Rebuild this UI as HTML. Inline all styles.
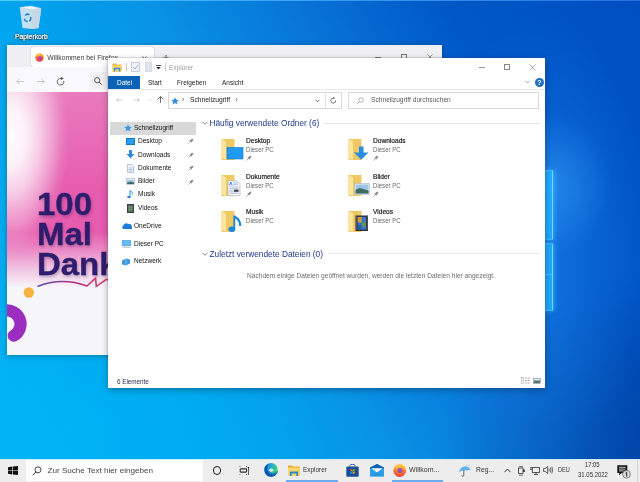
<!DOCTYPE html>
<html><head><meta charset="utf-8">
<style>
*{margin:0;padding:0;box-sizing:border-box}
html,body{width:640px;height:482px;overflow:hidden}
body{position:relative;font-family:"Liberation Sans",sans-serif;
background:radial-gradient(ellipse 260px 170px at 90px 420px,rgba(0,185,250,.35) 0%,rgba(0,185,250,0) 100%),radial-gradient(ellipse 220px 200px at 660px 470px,rgba(0,30,110,.45) 0%,rgba(0,30,110,0) 100%),linear-gradient(62deg,#00b4f3 0%,#00a6ef 27%,#0894e6 44%,#0874d8 61.5%,#0058c8 78%,#004ec2 100%);}
.a{position:absolute;white-space:nowrap}
#wall2{position:absolute;left:0;top:0;width:640px;height:482px;
background:radial-gradient(ellipse 60px 70px at 552px 185px,rgba(60,170,255,.45) 0%,rgba(60,170,255,0) 100%),radial-gradient(ellipse 110px 230px at 540px 245px,rgba(40,140,250,.45) 0%,rgba(40,140,250,.22) 50%,rgba(40,140,250,0) 100%);}
.pane{position:absolute;left:530px;width:22.5px;background:linear-gradient(90deg,rgba(25,165,250,.8),rgba(35,180,255,.85));border-right:1.5px solid #6adcff;border-top:1px solid rgba(90,200,255,.5);border-bottom:1px solid rgba(90,200,255,.5);box-shadow:2px 0 4px rgba(80,200,255,.45)}
#topline{position:absolute;left:0;top:0;width:640px;height:1.3px;background:linear-gradient(90deg,#52cdfa,#3aa0f0 50%,#2a70e0)}
/* firefox */
#ff{will-change:transform;position:absolute;left:7px;top:45px;width:435px;height:310px;background:#f0f0f4;box-shadow:0 1px 6px rgba(0,0,0,.3);overflow:hidden}
#ffcontent{position:absolute;left:0;top:47px;width:435px;height:263px;background:#f7f6fb;overflow:hidden}
/* explorer */
#ex{will-change:transform;position:absolute;left:108px;top:58px;width:437px;height:330px;background:#fff;box-shadow:0 0 0 .5px rgba(90,90,110,.3),0 2px 7px rgba(0,0,0,.3);overflow:hidden}
.t6{font-size:6.5px;color:#222}
.sb{font-size:6.9px;line-height:10px;color:#111;transform:scaleX(.95);transform-origin:0 0}
.hd{font-size:8.3px;line-height:10px;color:#1e3a8a}
.nm{font-size:6.6px;line-height:10px;color:#111;-webkit-text-stroke:.15px #111}
.sub{font-size:6.6px;line-height:10px;color:#6a6a6a;transform:scaleX(.92);transform-origin:0 0}
/* taskbar */
#tb{will-change:transform;position:absolute;left:0;top:459px;width:640px;height:23px;background:#ededed}
</style></head><body>
<div id="wall2"></div>
<div id="topline"></div>
<div class="pane" style="top:170px;height:70px"></div>
<div class="pane" style="top:243px;height:68px"></div>
<div class="a" style="left:545px;top:274px;width:7px;height:1px;background:rgba(120,210,255,.5)"></div>

<!-- recycle bin -->
<svg class="a" style="left:18px;top:5px" width="25" height="25" viewBox="0 0 25 25">
  <path d="M1.7 2.5L13 1 23.2 3.5 20.5 23 14 24 4.5 23z" fill="#d8e8f3" opacity=".9"/>
  <path d="M13 4.5L23.2 3.5 20.5 23 14 24z" fill="#c6d8e6"/>
  <path d="M1.7 2.5L13 1 23.2 3.5 13 4.5z" fill="#f4f8fb" stroke="#b6cad8" stroke-width=".5"/>
  <path d="M7.2 10.5a3 3 0 0 1 4.2-.6M12.3 11.8a3 3 0 0 1-1 4.3M9.8 16.4a3 3 0 0 1-3.4-2.7" fill="none" stroke="#2a7fd0" stroke-width="1.5"/>
</svg>
<div class="a" style="will-change:transform;left:14.5px;top:33px;font-size:6.8px;line-height:8px;color:#fff;-webkit-text-stroke:.25px #fff;text-shadow:0 0 1.5px rgba(0,0,0,1),0 .5px 1px rgba(0,0,0,.9),0 0 2px rgba(0,0,0,.6)">Papierkorb</div>

<!-- FIREFOX -->
<div id="ff">
  <div class="a" style="left:24px;top:2px;width:123px;height:20px;background:#fff;border-radius:3px;box-shadow:0 0 1.5px rgba(0,0,0,.3)"></div>
  <svg class="a" style="left:27.5px;top:8px" width="9" height="9" viewBox="0 0 9 9">
    <defs><radialGradient id="fxa" cx=".45" cy=".2" r=".9"><stop offset="0" stop-color="#ffcf3a"/><stop offset=".45" stop-color="#ff6a2e"/><stop offset="1" stop-color="#e0205a"/></radialGradient></defs>
    <circle cx="4.5" cy="4.6" r="4.2" fill="url(#fxa)"/>
    <circle cx="4.9" cy="5" r="1.9" fill="#9a3ad0" opacity=".85"/>
    <path d="M1 3.2Q2.5 .6 5.5 .8 8.3 1.6 8.6 4.5" fill="none" stroke="#ffc83a" stroke-width=".9"/>
  </svg>
  <div class="a" style="left:40.3px;top:7.8px;font-size:6.8px;line-height:10px;color:#3a3a3a">Willkommen bei Firefox</div>
  <svg class="a" style="left:135px;top:10.8px" width="5" height="5" viewBox="0 0 5 5"><path d="M.5 .5l4 4M4.5 .5l-4 4" stroke="#333" stroke-width=".8"/></svg>
  <svg class="a" style="left:156px;top:10.3px" width="6" height="6" viewBox="0 0 6 6"><path d="M3 0v6M0 3h6" stroke="#333" stroke-width=".8"/></svg>
  <div class="a" style="left:368px;top:11.5px;width:6px;height:.8px;background:#777"></div>
  <div class="a" style="left:394px;top:9px;width:6px;height:6px;border:.8px solid #777"></div>
  <svg class="a" style="left:420px;top:9px" width="6" height="6" viewBox="0 0 6 6"><path d="M.5 .5l5 5M5.5 .5l-5 5" stroke="#777" stroke-width=".8"/></svg>
  <div class="a" style="left:0;top:22px;width:435px;height:25px;background:#f9f9fb"></div>
  <div class="a" style="left:82.5px;top:27px;width:353px;height:16.5px;background:#f1f1f4;border-radius:2px"></div>
  <svg class="a" style="left:9px;top:32.5px" width="8" height="7" viewBox="0 0 8 7"><path d="M7.8 3.5H.8M3.6.6L.8 3.5l2.8 2.9" fill="none" stroke="#b8b8bc" stroke-width=".8"/></svg>
  <svg class="a" style="left:30px;top:32.5px" width="8" height="7" viewBox="0 0 8 7"><path d="M.2 3.5h7M4.4.6l2.8 2.9-2.8 2.9" fill="none" stroke="#b8b8bc" stroke-width=".8"/></svg>
  <svg class="a" style="left:49px;top:32px" width="9" height="9" viewBox="0 0 9 9"><path d="M7.7 3.9A3.3 3.3 0 1 1 5.1 1.5" fill="none" stroke="#4a4a50" stroke-width=".9"/><path d="M5 .1L7.8 1.6 5 3.1z" fill="#4a4a50"/></svg>
  <svg class="a" style="left:87px;top:32px" width="8" height="8" viewBox="0 0 8 8"><circle cx="3.2" cy="3.2" r="2.6" fill="none" stroke="#444" stroke-width=".9"/><path d="M5.1 5.1L7.6 7.6" stroke="#444" stroke-width="1"/></svg>
  <div id="ffcontent">
    <div class="a" style="left:0;top:0;width:435px;height:263px;background:linear-gradient(180deg,rgba(230,92,174,.8) 0px,#e65cae 100px,#e65cae 140px,rgba(230,92,174,.7) 158px,rgba(230,92,174,.3) 178px,rgba(230,92,174,0) 196px)"></div>
    <div class="a" style="left:0;top:0;width:435px;height:200px;background:radial-gradient(ellipse 58px 118px at 4px 45px,rgba(255,255,255,.98) 0%,rgba(255,255,255,.9) 25%,rgba(255,255,255,.68) 48%,rgba(255,255,255,.35) 72%,rgba(255,255,255,.1) 88%,rgba(255,255,255,0) 100%)"></div>
    <div class="a" style="left:30px;top:96.6px;font-size:30.5px;line-height:30.2px;font-weight:bold;color:#2d1d6c;-webkit-text-stroke:.35px #2d1d6c;transform:scaleX(1.08);transform-origin:0 0;text-shadow:1px 2px 3px rgba(40,20,80,.3)">100<br>Mal<br>Dank</div>
    <svg class="a" style="left:0;top:150px" width="120" height="113">
      <defs><linearGradient id="wv" x1="0" y1="0" x2="1" y2="0"><stop offset="0" stop-color="#5058a8"/><stop offset=".5" stop-color="#b02c80"/><stop offset="1" stop-color="#e23a50"/></linearGradient></defs>
      <path d="M30.5 44.5Q54 35 79.9 44L88.6 36.1 89.3 44.5 99.3 37.4 106 40" fill="none" stroke="url(#wv)" stroke-width="1.5" stroke-linejoin="miter"/>
      <circle cx="21.8" cy="50.5" r="5.2" fill="#f7b13e"/>
      <path d="M-2.34 68.7A13.5 13.5 0 0 1 6.75 93.7" fill="none" stroke="#9b2dbf" stroke-width="12.2" stroke-linecap="round"/>
    </svg>
  </div>
</div>

<!-- EXPLORER -->
<div id="ex">
  <!-- title bar -->
  <svg class="a" style="left:4px;top:5px" width="10" height="9" viewBox="0 0 10 9">
    <path d="M0.5 0.5h3.5l1 1h4.5v7h-9z" fill="#e8b94a"/>
    <rect x="0.5" y="2.5" width="9" height="6" fill="#f6d36e"/>
    <path d="M2.5 8.5v-3h5v3" fill="none" stroke="#3b8fd6" stroke-width="1.4"/>
  </svg>
  <div class="a" style="left:18px;top:5px;width:1px;height:8px;background:#ccc"></div>
  <svg class="a" style="left:23px;top:4px" width="9" height="10" viewBox="0 0 9 10">
    <rect x="0.5" y="0.5" width="8" height="9" fill="#eef3fa" stroke="#aac" stroke-width=".6"/>
    <path d="M2 5l2 2 3-4" fill="none" stroke="#8aa" stroke-width=".8"/>
  </svg>
  <svg class="a" style="left:37px;top:4px" width="7" height="10" viewBox="0 0 7 10">
    <rect x="0.5" y="0.5" width="6" height="9" fill="#dfe5f0" stroke="#c5cbd8" stroke-width=".6"/>
  </svg>
  <svg class="a" style="left:48px;top:7px" width="5" height="5" viewBox="0 0 5 5">
    <rect x="0" y="0" width="5" height="0.8" fill="#222"/>
    <path d="M0.3 2h4.4l-2.2 2.6z" fill="#222"/>
  </svg>
  <div class="a" style="left:57px;top:5px;width:1px;height:8px;background:#ccc"></div>
  <div class="a" style="left:61px;top:4.5px;font-size:6.5px;line-height:10px;color:#9a9a9a">Explorer</div>
  <div class="a" style="left:371px;top:9.3px;width:5.5px;height:.8px;background:#999"></div>
  <div class="a" style="left:396px;top:6px;width:6px;height:6px;border:.8px solid #888"></div>
  <svg class="a" style="left:421px;top:6px" width="7" height="7" viewBox="0 0 7 7"><path d="M0.5 0.5l6 6M6.5 0.5l-6 6" stroke="#888" stroke-width=".7"/></svg>

  <!-- ribbon tabs -->
  <div class="a" style="left:0;top:18px;width:32px;height:12.5px;background:#0c63b8"></div>
  <div class="a" style="left:9px;top:20px;font-size:6.5px;line-height:10px;color:#fff">Datei</div>
  <div class="a" style="left:40px;top:20px;font-size:6.5px;line-height:10px;color:#222">Start</div>
  <div class="a" style="left:69px;top:20px;font-size:6.5px;line-height:10px;color:#222">Freigeben</div>
  <div class="a" style="left:114px;top:20px;font-size:6.5px;line-height:10px;color:#222">Ansicht</div>
  <svg class="a" style="left:417px;top:22px" width="5" height="4" viewBox="0 0 5 4"><path d="M0.5 0.8l2 2 2-2" fill="none" stroke="#777" stroke-width=".7"/></svg>
  <div class="a" style="left:427px;top:19.5px;width:9px;height:9px;border-radius:50%;background:#1c6fc4;color:#fff;font-size:7px;line-height:9px;text-align:center;font-weight:bold">?</div>
  <div class="a" style="left:0;top:30.5px;width:437px;height:1px;background:#e8e8e8"></div>

  <!-- nav -->
  <svg class="a" style="left:8px;top:38.5px" width="7" height="6" viewBox="0 0 7 6"><path d="M0.5 3h6M3 0.5L0.5 3 3 5.5" fill="none" stroke="#bbb" stroke-width=".7"/></svg>
  <svg class="a" style="left:24.5px;top:38.5px" width="7" height="6" viewBox="0 0 7 6"><path d="M0.5 3h6M4 0.5L6.5 3 4 5.5" fill="none" stroke="#bbb" stroke-width=".7"/></svg>
  <svg class="a" style="left:38.5px;top:40px" width="5" height="4" viewBox="0 0 5 4"><path d="M0.5 0.8l2 2 2-2" fill="none" stroke="#ccc" stroke-width=".7"/></svg>
  <svg class="a" style="left:49px;top:38px" width="7" height="7" viewBox="0 0 7 7"><path d="M3.5 6.8V0.5M0.8 3.2L3.5 0.5 6.2 3.2" fill="none" stroke="#444" stroke-width=".8"/></svg>
  <div class="a" style="left:60px;top:34px;width:174px;height:17px;border:1px solid #d9d9d9"></div>
  <div class="a" style="left:216.5px;top:35px;width:1px;height:15px;background:#e3e3e3"></div>
  <svg class="a" style="left:63px;top:38.5px" width="8" height="8" viewBox="0 0 8 8"><path d="M4 0.3l1.1 2.5 2.7.2-2 1.8.6 2.7L4 6.1 1.6 7.5l.6-2.7-2-1.8 2.7-.2z" fill="#2f8be0"/></svg>
  <div class="a" style="left:74px;top:37px;font-size:6.5px;line-height:10px;color:#444">›</div>
  <div class="a" style="left:82px;top:37px;font-size:6.7px;line-height:10px;color:#222">Schnellzugriff</div>
  <div class="a" style="left:127.5px;top:37px;font-size:6.5px;line-height:10px;color:#444">›</div>
  <svg class="a" style="left:206.5px;top:40.5px" width="5" height="4" viewBox="0 0 5 4"><path d="M0.5 0.8l2 2 2-2" fill="none" stroke="#444" stroke-width=".8"/></svg>
  <svg class="a" style="left:222px;top:38.5px" width="7" height="7" viewBox="0 0 7 7"><path d="M5.7 3.3A2.5 2.5 0 1 1 3.3 1.1" fill="none" stroke="#555" stroke-width=".8"/><path d="M3.2 0L5.2 1.1 3.2 2.2z" fill="#555"/></svg>
  <div class="a" style="left:240px;top:34px;width:191px;height:17px;border:1px solid #d9d9d9"></div>
  <svg class="a" style="left:248px;top:38.5px" width="8" height="8" viewBox="0 0 8 8"><circle cx="5" cy="3" r="2.3" fill="none" stroke="#999" stroke-width=".7"/><path d="M3.3 4.7L0.7 7.3" stroke="#999" stroke-width=".8"/></svg>
  <div class="a" style="left:263px;top:37px;font-size:6.67px;line-height:10px;color:#5a5a5a">Schnellzugriff durchsuchen</div>

  <!-- sidebar -->
  <div class="a" style="left:1.5px;top:63.5px;width:86px;height:13px;background:#d9d9d9"></div>
  <svg class="a" style="left:15.5px;top:66px" width="8" height="8" viewBox="0 0 8 8"><path d="M4 0.3l1.1 2.5 2.7.2-2 1.8.6 2.7L4 6.1 1.6 7.5l.6-2.7-2-1.8 2.7-.2z" fill="#3c96e6"/></svg>
  <div class="a sb" style="left:26px;top:64.6px">Schnellzugriff</div>
  <div class="a sb" style="left:30px;top:78.2px">Desktop</div>
  <div class="a sb" style="left:30px;top:91.5px">Downloads</div>
  <div class="a sb" style="left:30px;top:105.1px">Dokumente</div>
  <div class="a sb" style="left:30px;top:118.4px">Bilder</div>
  <div class="a sb" style="left:30px;top:131.4px">Musik</div>
  <div class="a sb" style="left:30px;top:145.1px">Videos</div>
  <div class="a sb" style="left:26px;top:162.9px">OneDrive</div>
  <div class="a sb" style="left:26px;top:180.6px">Dieser PC</div>
  <div class="a sb" style="left:26px;top:198.4px">Netzwerk</div>
  <!-- sidebar icons -->
  <div class="a" style="left:18px;top:80px;width:9px;height:7px;background:#2a9cf0;border:.6px solid #1577c8"></div>
  <svg class="a" style="left:18px;top:92px" width="9" height="9" viewBox="0 0 9 9"><path d="M3 0h3v4h2.5L4.5 8.5 0.5 4H3z" fill="#2f8be0"/></svg>
  <svg class="a" style="left:19px;top:106px" width="7" height="9" viewBox="0 0 7 9"><path d="M0.5 0.5h4l2 2v6h-6z" fill="#f4f7fb" stroke="#8aa4c4" stroke-width=".6"/><path d="M1.5 4h4M1.5 5.5h4M1.5 7h4" stroke="#6a9ad0" stroke-width=".5"/></svg>
  <svg class="a" style="left:18px;top:120px" width="9" height="7" viewBox="0 0 9 7"><rect x=".3" y=".3" width="8.4" height="6.4" fill="#e9eef4" stroke="#9ab" stroke-width=".5"/><path d="M1 2h7v4H1z" fill="#a9c7e6"/><path d="M1 5l3-1.5 4 1v1.5H1z" fill="#3a6a6a"/></svg>
  <svg class="a" style="left:19px;top:132px" width="7" height="9" viewBox="0 0 7 9"><path d="M3 0.5v6" stroke="#2f8be0" stroke-width="1"/><ellipse cx="2" cy="7" rx="1.8" ry="1.3" fill="#2f8be0"/><path d="M3 0.5q3 1.5 2.5 4" fill="none" stroke="#2f8be0" stroke-width=".9"/></svg>
  <svg class="a" style="left:19px;top:146px" width="7" height="9" viewBox="0 0 7 9"><rect x="0" y="0" width="7" height="9" fill="#3a4048"/><rect x="1.2" y="1.5" width="4.6" height="6" fill="#6a8a6a"/></svg>
  <svg class="a" style="left:13.5px;top:165px" width="10" height="6" viewBox="0 0 10 6"><path d="M1.6 5.9A1.6 1.6 0 0 1 1.3 2.8 2.9 2.9 0 0 1 6.3 1.3 2.2 2.2 0 0 1 9.6 3.9 1.1 1.1 0 0 1 8.6 5.9z" fill="#1a7ed6"/></svg>
  <svg class="a" style="left:14px;top:182px" width="9" height="8" viewBox="0 0 9 8"><rect x=".3" y=".3" width="8.4" height="5.6" fill="#62bcf2" stroke="#3a92d6" stroke-width=".5"/><path d="M.5 7.3h8" stroke="#b8bcc0" stroke-width=".9"/></svg>
  <svg class="a" style="left:13px;top:199px" width="10" height="9" viewBox="0 0 10 9"><path d="M1 3.5l4-2 4 1v4l-4 2-4-1z" fill="#3d9ae0"/><path d="M5 1.5v7" stroke="#bfe0ff" stroke-width=".5"/></svg>
  <!-- pins -->
  <svg class="a pin" style="left:80px;top:80px" width="6" height="6" viewBox="0 0 6 6"><path d="M.4 5.6L2.4 3.6" stroke="#8a8a8a" stroke-width=".7"/><path d="M1.2 2.6L3.4 4.8 3.9 3.4 5.6 1.9 4.1.4 2.6 2.1z" fill="#8a8a8a"/></svg>
  <svg class="a pin" style="left:80px;top:93.5px" width="6" height="6" viewBox="0 0 6 6"><path d="M.4 5.6L2.4 3.6" stroke="#8a8a8a" stroke-width=".7"/><path d="M1.2 2.6L3.4 4.8 3.9 3.4 5.6 1.9 4.1.4 2.6 2.1z" fill="#8a8a8a"/></svg>
  <svg class="a pin" style="left:80px;top:107px" width="6" height="6" viewBox="0 0 6 6"><path d="M.4 5.6L2.4 3.6" stroke="#8a8a8a" stroke-width=".7"/><path d="M1.2 2.6L3.4 4.8 3.9 3.4 5.6 1.9 4.1.4 2.6 2.1z" fill="#8a8a8a"/></svg>
  <svg class="a pin" style="left:80px;top:120.5px" width="6" height="6" viewBox="0 0 6 6"><path d="M.4 5.6L2.4 3.6" stroke="#8a8a8a" stroke-width=".7"/><path d="M1.2 2.6L3.4 4.8 3.9 3.4 5.6 1.9 4.1.4 2.6 2.1z" fill="#8a8a8a"/></svg>

  <!-- main -->
  <svg class="a" style="left:93.5px;top:62.5px" width="6" height="4" viewBox="0 0 6 4"><path d="M0.5 0.8l2.5 2.5 2.5-2.5" fill="none" stroke="#555" stroke-width=".7"/></svg>
  <div class="a hd" style="left:101.5px;top:59.5px">Häufig verwendete Ordner (6)</div>
  <div class="a" style="left:216px;top:64.5px;width:216px;height:1px;background:#e5e5e5"></div>

  <div class="a nm" style="left:138px;top:77.5px">Desktop</div>
  <div class="a sub" style="left:138px;top:86.6px">Dieser PC</div>
  <div class="a nm" style="left:138px;top:113.5px">Dokumente</div>
  <div class="a sub" style="left:138px;top:122.6px">Dieser PC</div>
  <div class="a nm" style="left:138px;top:149.3px">Musik</div>
  <div class="a sub" style="left:138px;top:158px">Dieser PC</div>
  <div class="a nm" style="left:265px;top:77.5px">Downloads</div>
  <div class="a sub" style="left:265px;top:86.6px">Dieser PC</div>
  <div class="a nm" style="left:265px;top:113.5px">Bilder</div>
  <div class="a sub" style="left:265px;top:122.6px">Dieser PC</div>
  <div class="a nm" style="left:265px;top:149.3px">Videos</div>
  <div class="a sub" style="left:265px;top:158px">Dieser PC</div>
  <svg class="a" style="left:113px;top:80px" width="23" height="23" viewBox="0 0 23 23">
    <path d="M0.5 1h13v21h-13z" fill="#f0c963"/>
    <path d="M0.5 1L5 3.5V22L0.5 20z" fill="#fbe3a0"/>
    <rect x="6" y="9.5" width="16" height="11.5" fill="#1e9af0" stroke="#0f78cc" stroke-width=".6"/>
  </svg>
  <svg class="a" style="left:240px;top:80px" width="23" height="23" viewBox="0 0 23 23">
    <path d="M0.5 1h13v21h-13z" fill="#f0c963"/>
    <path d="M0.5 1L5 3.5V22L0.5 20z" fill="#fbe3a0"/>
    <path d="M11 8.5h4.5v6h5l-7.3 7.3-7.3-7.3h5z" fill="#2c8ee0"/>
  </svg>
  <svg class="a" style="left:113px;top:116px" width="23" height="23" viewBox="0 0 23 23">
    <path d="M0.5 1h13v21h-13z" fill="#f0c963"/>
    <path d="M0.5 1L5 3.5V22L0.5 20z" fill="#fbe3a0"/>
    <path d="M7 6.8h9l3 3v11.9h-12z" fill="#f8fafc" stroke="#9aa4b4" stroke-width=".6"/><path d="M8.5 11.5l1.3-3.5 1.3 3.5" fill="none" stroke="#2a7ae0" stroke-width=".9"/><path d="M12 9h5M12 10.6h5M8.5 13h9M8.5 14.6h9M8.5 16.2h4M8.5 17.8h9M8.5 19.4h9" stroke="#8aa0c0" stroke-width=".6"/><path d="M13 15.6h4.5v2.2H13z" fill="#3a4450"/>
  </svg>
  <svg class="a" style="left:240px;top:116px" width="23" height="23" viewBox="0 0 23 23">
    <path d="M0.5 1h13v21h-13z" fill="#f0c963"/>
    <path d="M0.5 1L5 3.5V22L0.5 20z" fill="#fbe3a0"/>
    <rect x="6.5" y="9.5" width="15" height="11" fill="#edf2f6" stroke="#aab4c0" stroke-width=".6"/><path d="M7.5 10.5h13v9h-13z" fill="#9fc5e6"/><path d="M7.5 16l4-2 9 2.5v3h-13z" fill="#3f6b5d"/>
  </svg>
  <svg class="a" style="left:113px;top:152px" width="23" height="23" viewBox="0 0 23 23">
    <path d="M0.5 1h13v21h-13z" fill="#f0c963"/>
    <path d="M0.5 1L5 3.5V22L0.5 20z" fill="#fbe3a0"/>
    <path d="M13.3 5.5v14" stroke="#1a86de" stroke-width="1.9"/><ellipse cx="10.8" cy="19.3" rx="3.4" ry="2.7" fill="#1a86de"/><path d="M13.3 6.5q6.5 3.5 5.8 9.5" fill="none" stroke="#1a86de" stroke-width="2"/>
  </svg>
  <svg class="a" style="left:240px;top:152px" width="23" height="23" viewBox="0 0 23 23">
    <path d="M0.5 1h13v21h-13z" fill="#f0c963"/>
    <path d="M0.5 1L5 3.5V22L0.5 20z" fill="#fbe3a0"/>
    <rect x="7.5" y="5.5" width="12.5" height="15.5" fill="#2a2e34"/><path d="M8.3 6.5v14M19.2 6.5v14" stroke="#9aa0a8" stroke-width=".8" stroke-dasharray="1 1"/><rect x="9.6" y="6.8" width="8.4" height="12.8" fill="#3a78c8"/><path d="M9.6 7h4v5.5h-4z" fill="#d89a2a"/><path d="M14 12.5h4v4h-4z" fill="#5a9a4a"/><path d="M9.6 15h4v4.6h-4z" fill="#2a5aa8"/>
  </svg>
  <svg class="a" style="left:138px;top:97px" width="6" height="6" viewBox="0 0 6 6"><path d="M.4 5.6L2.4 3.6" stroke="#8a8a8a" stroke-width=".7"/><path d="M1.2 2.6L3.4 4.8 3.9 3.4 5.6 1.9 4.1.4 2.6 2.1z" fill="#8a8a8a"/></svg><svg class="a" style="left:265px;top:97px" width="6" height="6" viewBox="0 0 6 6"><path d="M.4 5.6L2.4 3.6" stroke="#8a8a8a" stroke-width=".7"/><path d="M1.2 2.6L3.4 4.8 3.9 3.4 5.6 1.9 4.1.4 2.6 2.1z" fill="#8a8a8a"/></svg><svg class="a" style="left:138px;top:133px" width="6" height="6" viewBox="0 0 6 6"><path d="M.4 5.6L2.4 3.6" stroke="#8a8a8a" stroke-width=".7"/><path d="M1.2 2.6L3.4 4.8 3.9 3.4 5.6 1.9 4.1.4 2.6 2.1z" fill="#8a8a8a"/></svg><svg class="a" style="left:265px;top:133px" width="6" height="6" viewBox="0 0 6 6"><path d="M.4 5.6L2.4 3.6" stroke="#8a8a8a" stroke-width=".7"/><path d="M1.2 2.6L3.4 4.8 3.9 3.4 5.6 1.9 4.1.4 2.6 2.1z" fill="#8a8a8a"/></svg>

  <svg class="a" style="left:93.5px;top:193.5px" width="6" height="4" viewBox="0 0 6 4"><path d="M0.5 0.8l2.5 2.5 2.5-2.5" fill="none" stroke="#555" stroke-width=".7"/></svg>
  <div class="a hd" style="left:101.5px;top:190.6px">Zuletzt verwendete Dateien (0)</div>
  <div class="a" style="left:220px;top:195.2px;width:212px;height:1px;background:#ebebeb"></div>
  <div class="a" style="left:139px;top:212.6px;font-size:6.6px;line-height:10px;color:#6d6d6d">Nachdem einige Dateien geöffnet wurden, werden die letzten Dateien hier angezeigt.</div>

  <div class="a" style="left:9px;top:318.6px;font-size:6.3px;line-height:10px;color:#2a2f50">6 Elemente</div>
  <svg class="a" style="left:412.5px;top:319px" width="9" height="7" viewBox="0 0 9 7"><rect x=".3" y=".3" width="2" height="6.4" fill="none" stroke="#999" stroke-width=".5"/><path d="M4 1h1.5M6.5 1h2M4 3.5h1.5M6.5 3.5h2M4 6h1.5M6.5 6h2" stroke="#777" stroke-width=".7"/></svg>
  <svg class="a" style="left:425px;top:320px" width="8" height="6" viewBox="0 0 8 6"><rect x=".3" y=".3" width="7.4" height="5.4" fill="#dde8f0" stroke="#778" stroke-width=".5"/><path d="M1 2.5h6v2.5H1z" fill="#4a7a6a"/></svg>
</div>

<!-- TASKBAR -->
<div id="tb">
  <div class="a" style="left:0;top:0;width:640px;height:1px;background:#c8ecfa"></div>
  <svg class="a" style="left:7.5px;top:6.5px" width="10" height="9" viewBox="0 0 10 9">
    <path d="M0 1.2L4.3 .6V4.2H0z M4.9 .5L10 0V4.2H4.9z M0 4.8H4.3V8.4L0 7.8z M4.9 4.8H10V9L4.9 8.5z" fill="#111"/>
  </svg>
  <div class="a" style="left:26px;top:1px;width:177px;height:21px;background:#fff"></div>
  <svg class="a" style="left:32px;top:6.5px" width="10" height="10" viewBox="0 0 10 10"><circle cx="6" cy="3.8" r="3" fill="none" stroke="#333" stroke-width=".9"/><path d="M3.9 5.9L0.6 9.3" stroke="#333" stroke-width="1"/></svg>
  <div class="a" style="left:47.5px;top:7px;font-size:8.1px;line-height:10px;color:#444">Zur Suche Text hier eingeben</div>
  <div class="a" style="left:212.6px;top:7px;width:8.6px;height:8.6px;border-radius:50%;border:1.5px solid #1a1a1a"></div>
  <svg class="a" style="left:238.5px;top:6.5px" width="10.5" height="9" viewBox="0 0 10.5 9"><rect x="1.2" y="2.9" width="6.4" height="3.2" rx=".6" fill="none" stroke="#333" stroke-width="1.1"/><path d="M.5 .5h.8M7.2 .5h.8M.5 8.5h.8M7.2 8.5h.8" stroke="#444" stroke-width=".9"/><path d="M9.5 2v7" stroke="#333" stroke-width=".8"/><circle cx="9.5" cy="1.6" r=".8" fill="#111"/></svg>
  <svg class="a" style="left:263.5px;top:4.3px" width="14.5" height="14" viewBox="0 0 14.5 14">
    <defs><linearGradient id="eg" x1="0" y1="0" x2="1" y2=".4"><stop offset="0" stop-color="#1686d0"/><stop offset=".5" stop-color="#22a8d8"/><stop offset="1" stop-color="#46d468"/></linearGradient></defs>
    <circle cx="7" cy="6.9" r="6.8" fill="url(#eg)"/>
    <path d="M.4 6.2Q.6 1.8 5 .9 2.6 3.2 3.6 7.6 4.6 11 8.6 11.2 11.4 11.3 13.2 10 11.6 13.6 7 13.7 .6 13.4 .4 6.2z" fill="#0b57ab"/>
    <path d="M13.8 9.2Q13.4 12.8 9.6 13.8H14.5V9z" fill="#ececec"/>
    <path d="M4.9 7.6Q5 5.7 7 5.6 9.2 5.7 9.6 7.4 8.5 8.8 6.8 8.8 5.6 8.6 4.9 7.6z" fill="#e4f3f6"/>
    <path d="M4.6 7.8Q5.4 10.6 8.8 10.8 12 10.8 13.6 8.4" fill="none" stroke="#1a7cc8" stroke-width="1.2"/>
  </svg>
  <svg class="a" style="left:288px;top:5.5px" width="12" height="11" viewBox="0 0 12 11">
    <path d="M0 0.5h4l1 1h7v9.5H0z" fill="#e9a92e"/>
    <rect x="0" y="2.5" width="12" height="8.5" fill="#f8d66a"/>
    <path d="M2.8 11V7.5h6.4V11" fill="none" stroke="#2f86c9" stroke-width="1.8"/>
  </svg>
  <div class="a" style="left:303px;top:6px;font-size:7.4px;line-height:10px;color:#333;transform:scaleX(.87);transform-origin:0 0">Explorer</div>
  <div class="a" style="left:285.8px;top:21px;width:52px;height:2px;background:#6aaef0"></div>
  <svg class="a" style="left:346px;top:5px" width="13" height="13" viewBox="0 0 13 13">
    <path d="M4 2.5V1.5a2.5 1.2 0 0 1 5 0v1" fill="none" stroke="#2a5fae" stroke-width="1"/>
    <rect x="0.3" y="2.5" width="12.4" height="10.2" rx="1" fill="#1b4c96"/>
    <rect x="4.3" y="5.2" width="2" height="2" fill="#f25022"/><rect x="6.7" y="5.2" width="2" height="2" fill="#7fba00"/>
    <rect x="4.3" y="7.6" width="2" height="2" fill="#00a4ef"/><rect x="6.7" y="7.6" width="2" height="2" fill="#ffb900"/>
  </svg>
  <svg class="a" style="left:370px;top:5px" width="14.4" height="12.6" viewBox="0 0 14.4 12.6">
    <path d="M0 3.6L7 0 14 3.6V12.4H0z" fill="#2f9fe9"/>
    <path d="M0 3.6L7 0 14 3.6 14 4.4H0z" fill="#1060b4"/>
    <path d="M1.4 4.2H12.6L7 8.6z" fill="#f6fafe"/>
    <path d="M0 12.4L7 7.6 14 12.4z" fill="#1a90dc" opacity=".5"/>
  </svg>
  <svg class="a" style="left:393px;top:5px" width="13.5" height="13" viewBox="0 0 13.5 13">
    <defs><radialGradient id="fx" cx=".5" cy=".3" r=".8"><stop offset="0" stop-color="#ffd43a"/><stop offset=".5" stop-color="#ff7a2a"/><stop offset="1" stop-color="#e8204a"/></radialGradient></defs>
    <circle cx="6.7" cy="6.6" r="6.3" fill="url(#fx)"/>
    <circle cx="7" cy="6.4" r="2.7" fill="#8a3cc8" opacity=".8"/>
    <path d="M2.2 4.5Q4 .8 8.5 1.2 12 2.5 12.5 6" fill="none" stroke="#ffd040" stroke-width="1.3"/>
  </svg>
  <div class="a" style="left:408.6px;top:6px;font-size:7.4px;line-height:10px;color:#333;transform:scaleX(.95);transform-origin:0 0">Willkom...</div>
  <div class="a" style="left:391.5px;top:21px;width:51.5px;height:2px;background:#6aaef0"></div>
  <svg class="a" style="left:458px;top:4.5px" width="14" height="13" viewBox="0 0 14 13">
    <path d="M.5 8.2Q3 1.8 8 2.2 11.5 2.8 12.3 6.5 10.5 5.6 9 6.6 7.5 5.8 6 6.8 4.3 6 3 7.2 1.8 7 .5 8.2z" fill="#62b2ea"/>
    <path d="M5.8 6.2V11.3q0 1.1-1 1.1-.9 0-.9-.9" fill="none" stroke="#444" stroke-width=".8"/>
    <path d="M8.8 .6l-.4 1M11 1.2l-.5 1M12.8 2.8l-.6.8M13.3 5l-.8.4" stroke="#7cc4f0" stroke-width=".8"/>
  </svg>
  <div class="a" style="left:475.8px;top:6.3px;font-size:7.4px;line-height:10px;color:#333;transform:scaleX(.92);transform-origin:0 0">Reg...</div>
  <svg class="a" style="left:504px;top:8.5px" width="7" height="5" viewBox="0 0 7 5"><path d="M.5 4.2L3.5 1 6.5 4.2" fill="none" stroke="#222" stroke-width=".9"/></svg>
  <svg class="a" style="left:518px;top:6.5px" width="7" height="10" viewBox="0 0 7 10"><rect x=".5" y="2" width="4.5" height="5.5" fill="none" stroke="#333" stroke-width=".8"/><path d="M1 .6h4M1 9.2h4" stroke="#333" stroke-width=".7"/><rect x="5" y="3.5" width="1.8" height="2.5" fill="#333"/></svg>
  <svg class="a" style="left:529.5px;top:7.5px" width="10" height="8" viewBox="0 0 10 8"><rect x="2.3" y=".5" width="7.2" height="5" fill="none" stroke="#333" stroke-width=".8"/><path d="M0 .8h2.3M0 2.3h2.3M6 5.5v2M4 7.5h4" stroke="#333" stroke-width=".8"/></svg>
  <svg class="a" style="left:542.5px;top:6.5px" width="10" height="8" viewBox="0 0 10 8"><path d="M.5 2.6h1.8L4.6.5v7L2.3 5.4H.5z" fill="none" stroke="#333" stroke-width=".75"/><path d="M6 2.6q.6 1.4 0 2.8M7.4 1.6q1.1 2.4 0 4.8M8.8.6q1.6 3.4 0 6.8" fill="none" stroke="#333" stroke-width=".7"/></svg>
  <div class="a" style="left:558px;top:6px;font-size:6.9px;line-height:10px;color:#333;transform:scaleX(.8);transform-origin:0 0">DEU</div>
  <div class="a" style="left:584.8px;top:0.8px;font-size:7.3px;line-height:10px;color:#333;transform:scaleX(.8);transform-origin:0 0">17:05</div>
  <div class="a" style="left:577.7px;top:11px;font-size:7.3px;line-height:10px;color:#333;transform:scaleX(.82);transform-origin:0 0">31.05.2022</div>
  <svg class="a" style="left:617px;top:6px" width="15" height="15" viewBox="0 0 15 15">
    <path d="M.3 .3h10v7.6H4.6L2.2 10.2V7.9H.3z" fill="#111"/>
    <path d="M2 2.3h6.6M2 4.1h6.6M2 5.9h4.5" stroke="#f0f0f0" stroke-width=".8"/>
    <circle cx="9.5" cy="9.3" r="3.9" fill="#dcdcdc" stroke="#6a6a6a" stroke-width=".8"/>
    <path d="M8.6 8.2l1.1-.8v4.2" fill="none" stroke="#111" stroke-width=".9"/>
  </svg>
  <div class="a" style="left:637px;top:1px;width:1px;height:22px;background:#d4d4d4"></div>
</div>
</body></html>
